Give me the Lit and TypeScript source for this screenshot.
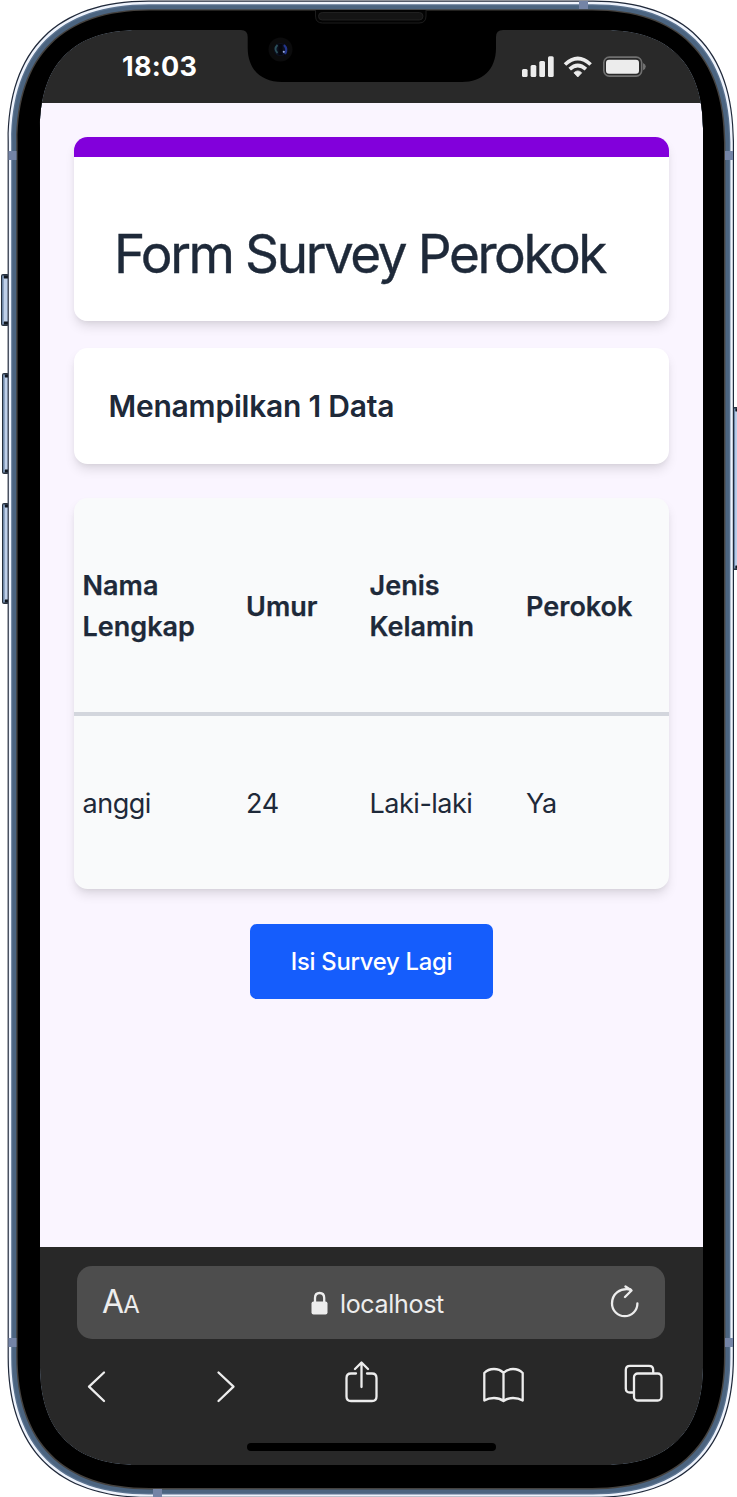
import { LitElement, html, css, svg } from "lit";
import { customElement } from "lit/decorators.js";

/** Closed rounded outline with continuous corners; `e` is the corner extent. */
const outline = (x0: number, y0: number, x1: number, y1: number, e: number) => {
  const k = e * 0.346;
  return (
    `M${x0 + e} ${y0}H${x1 - e}C${x1 - k} ${y0} ${x1} ${y0 + k} ${x1} ${y0 + e}` +
    `V${y1 - e}C${x1} ${y1 - k} ${x1 - k} ${y1} ${x1 - e} ${y1}` +
    `H${x0 + e}C${x0 + k} ${y1} ${x0} ${y1 - k} ${x0} ${y1 - e}` +
    `V${y0 + e}C${x0} ${y0 + k} ${x0 + k} ${y0} ${x0 + e} ${y0}Z`
  );
};

const SCREEN = outline(40, 30, 703, 1465, 98);

const RIM: Array<[number, string]> = [
  [0, "#20293a"],
  [1.2, "#eef3fc"],
  [3.6, "#5b7390"],
  [4.8, "#4b6480"],
  [8.6, "#45423f"],
  [10, "#000"],
];

@customElement("phone-frame")
export class PhoneFrame extends LitElement {
  static styles = css`
    :host {
      display: block;
    }
    svg {
      display: block;
    }
  `;

  private sideButton(x: number, y: number, w: number, h: number) {
    return svg`
      <rect x=${x} y=${y} width=${w} height=${h} rx="2" fill="#27313f"></rect>
      <rect x=${x + 1} y=${y + 1.5} width=${w} height=${h - 3} fill="#6f88a8"></rect>
      <rect x=${x + 2.6} y=${y + 4} width=${w - 3.6} height=${h - 8} fill="#bfd0ea"></rect>
      <rect x=${x + 3} y=${y + 1.5} width=${w - 3} height="3" fill="#10151d"></rect>
      <rect x=${x + 3} y=${y + h - 4.5} width=${w - 3} height="3" fill="#10151d"></rect>`;
  }

  render() {
    return html`
      <svg width="737" height="1497" viewBox="0 0 737 1497" aria-hidden="true">
        ${this.sideButton(1, 274, 8, 52)} ${this.sideButton(2, 373, 7, 101)}
        ${this.sideButton(2, 503, 7, 101)} ${this.sideButton(732.5, 407, 8, 163)}
        ${RIM.map(
          ([i, c]) => svg`<path fill-rule="evenodd" fill=${c}
            d=${outline(7.6 + i, 0.6 + i, 734 - i, 1498 - i, 141 - i * 0.9) + SCREEN}></path>`
        )}
        <g fill="#7484a6">
          <rect x="8.5" y="151" width="8" height="9"></rect>
          <rect x="725" y="151" width="8" height="9"></rect>
          <rect x="8.5" y="1338" width="8" height="9"></rect>
          <rect x="725" y="1338" width="8" height="9"></rect>
          <rect x="579" y="1" width="9" height="8"></rect>
          <rect x="153" y="1489" width="9" height="8"></rect>
        </g>
        <path
          d="M238 29V30H241Q247.7 30 247.7 37V48C247.7 70 262 82 282 82H462C482 82 496 70 496 48V37Q496 30 503 30H506V29Z"
          fill="#000"
        ></path>
        <path
          d="M315.5 10V16Q315.5 23 322.5 23H419Q426 23 426 16V10"
          fill="#030303"
          stroke="#1d1d1d"
          stroke-width="1"
        ></path>
        <rect x="318.5" y="12.5" width="104.5" height="7.5" rx="3.7" fill="#141414" stroke="#262626" stroke-width=".8"></rect>
        <circle cx="280.5" cy="49.5" r="12" fill="#0b0b0c"></circle>
        <circle cx="280.5" cy="49.5" r="6.6" fill="#0c1020"></circle>
        <path d="M277.500 45Q273.500 49 277.500 53" fill="none" stroke="#2c5059" stroke-width="1.800"></path>
        <path d="M284 45Q288 49 285 54" fill="none" stroke="#22348a" stroke-width="2.200"></path>
        <rect x="278.500" y="44" width="4" height="11" fill="#05060d"></rect>
        <circle cx="283.800" cy="51.800" r="1.100" fill="#93a4dc"></circle>
      </svg>
    `;
  }
}

@customElement("status-bar")
export class StatusBar extends LitElement {
  static styles = css`
    :host {
      display: flex;
      justify-content: space-between;
      align-items: center;
      box-sizing: border-box;
      height: 73px;
      padding: 0 57px 0 82px;
      background: #292929;
      color: #fff;
      font: 700 27px/32px Inter, sans-serif;
      letter-spacing: 0.250px;
    }
    svg {
      display: block;
    }
  `;

  render() {
    return html`
      <span>18:03</span>
      <svg width="125" height="22" viewBox="521 55 125 22" fill="#ececec" aria-hidden="true">
        <rect x="522" y="68" width="5.600" height="8" rx="1.500"></rect>
        <rect x="530.600" y="64" width="5.700" height="12" rx="1.500"></rect>
        <rect x="539.300" y="60" width="5.700" height="16" rx="1.500"></rect>
        <rect x="548" y="55.300" width="5.700" height="20.700" rx="1.500"></rect>
        <g fill="none" stroke="#ececec" stroke-width="3.700">
          <path d="M565 63.500Q577.800 51.500 590.600 63.500"></path>
          <path d="M569.700 68.200Q577.800 60.800 585.900 68.200"></path>
        </g>
        <path d="M577.800 76L573.900 71.800Q577.800 68 581.700 71.800Z" stroke="#ececec" stroke-width=".8" stroke-linejoin="round"></path>
        <rect x="603.800" y="56.100" width="37.900" height="19" rx="5.500" fill="none" stroke="#707070" stroke-width="1.600"></rect>
        <rect x="606" y="58.800" width="33" height="14" rx="3"></rect>
        <path d="M643 62Q645.800 63 645.800 65.600Q645.800 68.200 643 69.200Z" fill="#707070"></path>
      </svg>
    `;
  }
}

@customElement("survey-page")
export class SurveyPage extends LitElement {
  static styles = css`
    :host {
      display: flex;
      flex-direction: column;
      flex: 1;
      box-sizing: border-box;
      padding: 34px 34px 0;
      background: #faf5ff;
      color: #1e2939;
      font-family: Inter, sans-serif;
    }
    .card {
      box-sizing: border-box;
      border-radius: 13.6px;
      background: #fff;
      box-shadow: 0 6.8px 10.2px -1.7px rgba(0, 0, 0, 0.1), 0 3.4px 6.8px -3.4px rgba(0, 0, 0, 0.1);
      overflow: hidden;
    }
    .heading {
      height: 184px;
      padding: 63px 40px 0;
      background: linear-gradient(#8200db 20.400px, #fff 20.400px);
    }
    h1 {
      margin: 0;
      font-size: 53px;
      font-weight: 400;
      line-height: 108px;
      letter-spacing: -2.400px;
      -webkit-text-stroke: 0.400px #1e2939;
      white-space: nowrap;
    }
    .count {
      height: 115.500px;
      margin-top: 27px;
      padding: 0 34.500px;
    }
    h2 {
      margin: 0;
      font-size: 30px;
      font-weight: 600;
      line-height: 116px;
      letter-spacing: -0.220px;
      white-space: nowrap;
    }
    .data {
      height: 391px;
      margin-top: 34.500px;
      background: #f9fafb;
    }
    table {
      width: 100%;
      table-layout: fixed;
      border-collapse: separate;
      border-spacing: 0;
      font-size: 27px;
      line-height: 40.800px;
    }
    th,
    td {
      padding: 0 0 0 8.600px;
      text-align: left;
      vertical-align: middle;
      box-sizing: border-box;
    }
    th {
      height: 217.500px;
      padding-top: 5px;
      border-bottom: 4px solid #d3d6dd;
      font-weight: 600;
      -webkit-text-stroke: 0.250px #1e2939;
    }
    td {
      height: 174px;
      padding-top: 3px;
      font-weight: 400;
      letter-spacing: -0.500px;
    }
    .name { width: 163.500px; }
    .age { width: 123.500px; }
    .gender { width: 156.500px; }
    .again {
      align-self: center;
      box-sizing: border-box;
      width: 243px;
      height: 75px;
      margin-top: 35px;
      padding: 0;
      border: 0;
      border-radius: 6.800px;
      background: #155dfc;
      color: #fff;
      font: 500 23.800px/75px Inter, sans-serif;
      letter-spacing: -0.250px;
    }
  `;

  private rows = [["anggi", "24", "Laki-laki", "Ya"]];

  render() {
    return html`
      <header class="card heading"><h1>Form Survey Perokok</h1></header>
      <section class="card count"><h2>Menampilkan ${this.rows.length} Data</h2></section>
      <section class="card data">
        <table>
          <thead>
            <tr>
              <th class="name">Nama<br />Lengkap</th>
              <th class="age">Umur</th>
              <th class="gender">Jenis<br />Kelamin</th>
              <th>Perokok</th>
            </tr>
          </thead>
          <tbody>
            ${this.rows.map((r) => html`<tr>${r.map((c) => html`<td>${c}</td>`)}</tr>`)}
          </tbody>
        </table>
      </section>
      <button class="again">Isi Survey Lagi</button>
    `;
  }
}

@customElement("browser-bar")
export class BrowserBar extends LitElement {
  static styles = css`
    :host {
      display: flex;
      flex-direction: column;
      box-sizing: border-box;
      height: 218px;
      padding: 19px 37.600px 0 37.400px;
      background: #282828;
      color: #ededed;
      font-family: Inter, sans-serif;
    }
    svg {
      display: block;
      fill: none;
      stroke: #ededed;
      stroke-width: 2.300;
      stroke-linecap: round;
      stroke-linejoin: round;
    }
    .address {
      display: grid;
      grid-template-columns: 1fr auto 1fr;
      align-items: center;
      height: 73px;
      box-sizing: border-box;
      padding: 0 25.500px 0 24.600px;
      border-radius: 15px;
      background: #4d4d4d;
    }
    .size {
      padding-top: 1px;
      font-size: 32px;
      line-height: 40px;
      letter-spacing: -0.800px;
    }
    .small {
      font-size: 24px;
    }
    .site {
      display: flex;
      align-items: center;
      gap: 12px;
      padding: 2px 0 0 13px;
      font-size: 25px;
      line-height: 36px;
      letter-spacing: -0.300px;
    }
    .lock {
      margin-bottom: 2px;
    }
    .reload {
      justify-self: end;
    }
    .tools {
      display: grid;
      grid-template-columns: 129px 129px 138px 141px 39px;
      height: 42px;
      margin-top: 22px;
      padding-left: 9.600px;
    }
    .home {
      align-self: center;
      width: 249px;
      height: 8.500px;
      margin-top: 39.500px;
      border-radius: 4.500px;
      background: #000;
    }
  `;

  render() {
    return html`
      <div class="address">
        <span class="size">A<span class="small">A</span></span>
        <span class="site">
          <svg class="lock" width="17" height="24" viewBox="310 1291 17 24">
            <rect x="310.500" y="1301.500" width="16" height="13" rx="2" fill="#ededed" stroke="none"></rect>
            <path d="M314 1302V1298Q314 1293 318.600 1293T323.200 1298V1302"></path>
          </svg>
          localhost
        </span>
        <svg class="reload" width="30" height="36" viewBox="610 1287 30 36">
          <path d="M630.500 1291.500C620 1289.500 612 1296 612 1305.500A12.700 12.700 0 0 0 637.400 1305.500"></path>
          <path d="M625.500 1288.500L631.500 1292.500L625 1299"></path>
        </svg>
      </div>
      <nav class="tools">
        <svg width="20" height="42" viewBox="87 1361 20 42"><path d="M104 1372.500L89 1386.700L104 1401"></path></svg>
        <svg width="20" height="42" viewBox="216 1361 20 42"><path d="M218.500 1372.500L233.500 1386.700L218.500 1401"></path></svg>
        <svg width="34" height="42" viewBox="345 1361 34 42">
          <path d="M356 1373.500H351Q346.500 1373.500 346.500 1378V1396.500Q346.500 1401 351 1401H372Q376.500 1401 376.500 1396.500V1378Q376.500 1373.500 372 1373.500H367"></path>
          <path d="M361.500 1387V1363M355 1369L361.500 1362.500L368 1369"></path>
        </svg>
        <svg width="42" height="42" viewBox="483 1361 42 42">
          <path d="M503.500 1372.800Q499.500 1369 494 1369Q488 1369 484.300 1373V1400.500Q488.500 1398 494 1398Q499.500 1398 503.500 1401Q507.500 1398 513 1398Q518.500 1398 522.700 1400.500V1373Q519 1369 513 1369Q507.500 1369 503.500 1372.800ZM503.500 1372.800V1401"></path>
        </svg>
        <svg width="39" height="42" viewBox="624 1361 39 42">
          <path d="M633 1392.500H630Q625.800 1392.500 625.800 1388.500V1370Q625.800 1365.800 630 1365.800H649Q653.200 1365.800 653.200 1370V1373"></path>
          <rect x="634" y="1373.500" width="27.500" height="27" rx="3.800"></rect>
        </svg>
      </nav>
      <div class="home"></div>
    `;
  }
}

@customElement("app-root")
export class AppRoot extends LitElement {
  static styles = css`
    :host {
      display: block;
      position: relative;
      box-sizing: border-box;
      width: 737px;
      height: 1497px;
      padding: 30px 34px 32px 40px;
      background: #fff;
      overflow: hidden;
    }
    .screen {
      display: flex;
      flex-direction: column;
      height: 100%;
      border-radius: 74px;
      overflow: hidden;
    }
    .frame {
      position: absolute;
      inset: 0;
      pointer-events: none;
    }
  `;

  render() {
    return html`
      <main class="screen">
        <status-bar></status-bar>
        <survey-page></survey-page>
        <browser-bar></browser-bar>
      </main>
      <phone-frame class="frame"></phone-frame>
    `;
  }
}
